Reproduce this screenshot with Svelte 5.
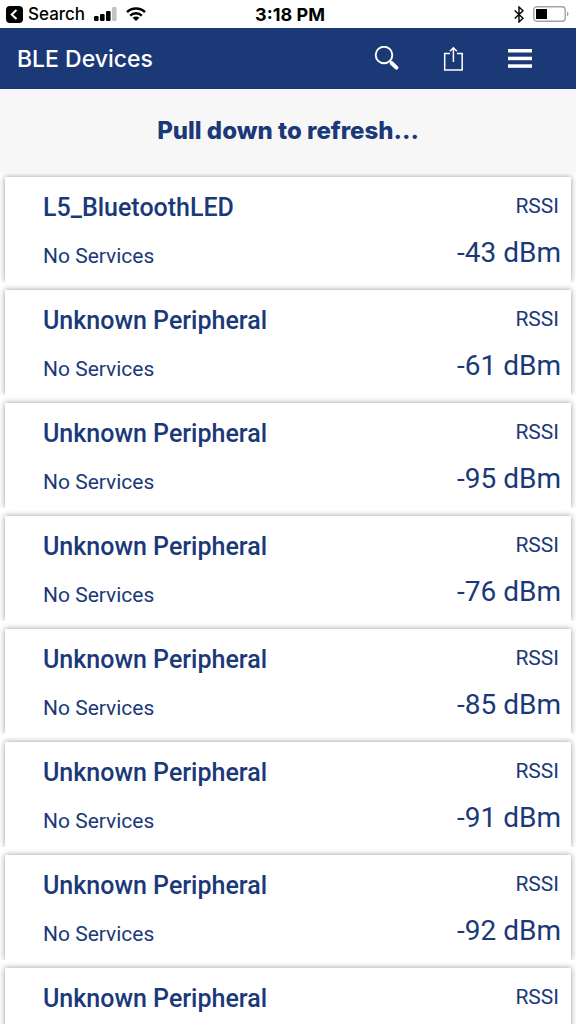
<script lang="ts">
	interface Device {
		name: string;
		services: string;
		rssi: number;
	}

	const devices: Device[] = [
		{ name: 'L5_BluetoothLED', services: 'No Services', rssi: -43 },
		{ name: 'Unknown Peripheral', services: 'No Services', rssi: -61 },
		{ name: 'Unknown Peripheral', services: 'No Services', rssi: -95 },
		{ name: 'Unknown Peripheral', services: 'No Services', rssi: -76 },
		{ name: 'Unknown Peripheral', services: 'No Services', rssi: -85 },
		{ name: 'Unknown Peripheral', services: 'No Services', rssi: -91 },
		{ name: 'Unknown Peripheral', services: 'No Services', rssi: -92 },
		{ name: 'Unknown Peripheral', services: 'No Services', rssi: -90 }
	];
</script>

<div class="app">
	<div class="status-bar">
		<div class="status-side">
			<button class="back">
				<svg width="17" height="17" viewBox="0 0 17 17" aria-hidden="true">
					<rect width="17" height="17" rx="4" fill="#000" />
					<path d="M10.5 4 5.7 8.5l4.8 4.5" fill="none" stroke="#fff" stroke-width="2" />
				</svg>
				Search
			</button>
			<svg width="23" height="14" viewBox="0 0 23 14" aria-hidden="true">
				<rect x="0" y="9" width="4.6" height="5" rx="1.2" />
				<rect x="6" y="7" width="4.6" height="7" rx="1.2" />
				<rect x="12" y="4" width="4.6" height="10" rx="1.2" />
				<rect x="18" y="0" width="4.6" height="14" rx="1.2" fill="#c4c4c4" />
			</svg>
			<svg width="20" height="14" viewBox="0 0 20 14" aria-hidden="true">
				<g fill="none" stroke="#000" stroke-width="2.6">
					<path d="M1 5.2a12.8 12.8 0 0 1 18 0" />
					<path d="M4.2 8.6a8.3 8.3 0 0 1 11.6 0" />
				</g>
				<path d="M10 14 6.6 10.8a4.9 4.9 0 0 1 6.8 0z" />
			</svg>
		</div>
		<span class="time">3:18 PM</span>
		<div class="status-side right">
			<svg width="10" height="17" viewBox="0 0 10 17" aria-hidden="true">
				<path
					d="M.7 4.5 9 12.2 5 16V1l4 3.8L.7 12.5"
					fill="none"
					stroke="#000"
					stroke-width="1.4"
				/>
			</svg>
			<svg width="36" height="16" viewBox="0 0 36 16" aria-hidden="true">
				<rect x=".8" y=".8" width="31.4" height="14.4" rx="3" fill="none" stroke="#a3a3a3" stroke-width="1.4" />
				<rect x="3" y="3" width="11" height="10" />
				<path d="M34 5.5v5c2-1 2-4 0-5z" fill="#a3a3a3" />
			</svg>
		</div>
	</div>

	<header class="toolbar">
		<h1>BLE Devices</h1>
		<div class="actions">
			<button aria-label="Search devices">
				<svg width="26" height="26" viewBox="0 0 26 26" fill="none" stroke="#fff">
					<circle cx="11" cy="9" r="8.3" stroke-width="1.9" />
					<path d="m16.5 14.8 2 2" stroke-width="2" />
					<path d="m18.8 17.2 4.6 4.4" stroke-width="4" stroke-linecap="round" />
				</svg>
			</button>
			<button aria-label="Share">
				<svg width="26" height="26" viewBox="0 0 26 26" fill="none" stroke="#fff" stroke-width="1.5">
					<path d="M10 7.5H4.7V24h17.5V7.5h-5.3" />
					<path d="M13.4 16V2.5M9.9 5.3l3.5-3.5 3.5 3.5" />
				</svg>
			</button>
			<button aria-label="Menu">
				<svg width="26" height="26" viewBox="0 0 26 26" fill="#fff">
					<rect x="1" y="3" width="24" height="3.5" />
					<rect x="1" y="10.7" width="24" height="3.5" />
					<rect x="1" y="18.3" width="24" height="3.5" />
				</svg>
			</button>
		</div>
	</header>

	<p class="refresh">Pull down to refresh...</p>

	<ul class="device-list">
		{#each devices as device}
			<li>
				<div class="card">
					<div class="info">
						<h2>{device.name}</h2>
						<span class="services">{device.services}</span>
					</div>
					<div class="signal">
						<span class="label">RSSI</span>
						<span class="value">{device.rssi} dBm</span>
					</div>
				</div>
			</li>
		{/each}
	</ul>
</div>

<style>
	:global(body) {
		margin: 0;
		background: #fff;
	}

	.app {
		display: flex;
		flex-direction: column;
		height: 100vh;
		overflow: hidden;
		color: #1b3979;
		font-family: Roboto, sans-serif;
	}

	button {
		padding: 0;
		border: 0;
		background: none;
		color: inherit;
		font: inherit;
	}

	svg {
		display: block;
	}

	.status-bar {
		display: flex;
		align-items: center;
		flex: none;
		height: 28px;
		padding: 0 7px 0 6px;
		color: #000;
		font-family: Inter, sans-serif;
		font-size: 17px;
	}

	.status-side {
		display: flex;
		flex: 1;
		align-items: center;
		gap: 9px;
	}

	.status-side.right {
		justify-content: flex-end;
	}

	.back {
		display: flex;
		align-items: center;
		gap: 5px;
		font-weight: 500;
	}

	.time {
		padding-left: 5px;
		font-size: 18px;
		font-weight: 700;
	}

	.toolbar {
		display: flex;
		align-items: center;
		justify-content: space-between;
		flex: none;
		height: 61px;
		padding: 0 43px 0 17px;
		background: #1b3877;
		color: #fff;
	}

	h1 {
		margin: 0;
		font-family: Inter, sans-serif;
		font-size: 23px;
		font-weight: 500;
	}

	.actions {
		display: flex;
		gap: 41px;
	}

	.refresh {
		flex: none;
		margin: 0;
		background: #f7f7f7;
		font-family: Inter, sans-serif;
		font-size: 24px;
		font-weight: 800;
		line-height: 84px;
		text-align: center;
	}

	.device-list {
		flex: 1;
		min-height: 0;
		margin: 0;
		padding: 0;
		overflow-y: auto;
		list-style: none;
		scrollbar-width: none;
	}

	/* clips the card shadow along its bottom edge */
	li {
		padding: 8px 5px 0;
		overflow: hidden;
	}

	li:first-child {
		padding-top: 4px;
	}

	.card {
		display: flex;
		justify-content: space-between;
		height: 105px;
		padding: 0 10px 0 38px;
		box-sizing: border-box;
		background: #fff;
		box-shadow: 0 0 6px rgba(0, 0, 0, 0.4);
	}

	.info,
	.signal {
		display: flex;
		flex-direction: column;
	}

	.signal {
		align-items: flex-end;
	}

	h2 {
		margin: 0;
		padding-top: 14px;
		font-size: 25px;
		font-weight: 500;
		line-height: 34px;
	}

	.services {
		padding-top: 16px;
		font-size: 21px;
		line-height: 30px;
	}

	.label {
		padding: 14px 2px 0 0;
		font-size: 21px;
		line-height: 30px;
	}

	.value {
		padding-top: 14px;
		font-size: 28px;
		line-height: 36px;
	}
</style>
